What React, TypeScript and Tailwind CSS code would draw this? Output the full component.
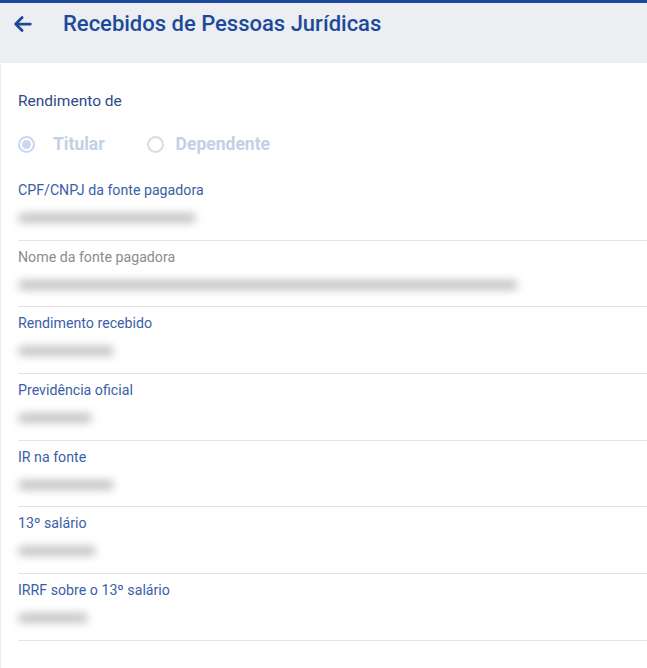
import React from "react";

const fields = [
  { label: "CPF/CNPJ da fonte pagadora", muted: false, w: "w-[178px]" },
  { label: "Nome da fonte pagadora", muted: true, w: "w-[500px]" },
  { label: "Rendimento recebido", muted: false, w: "w-[96px]" },
  { label: "Previdência oficial", muted: false, w: "w-[74px]" },
  { label: "IR na fonte", muted: false, w: "w-[96px]" },
  { label: "13º salário", muted: false, w: "w-[78px]" },
  { label: "IRRF sobre o 13º salário", muted: false, w: "w-[70px]" },
];

export default function App() {
  return (
    <div className="min-h-screen flex flex-col bg-white font-['Roboto',sans-serif]">
      <div className="h-[3px] bg-[#1b4a9c]" />

      {/* cabeçalho */}
      <div className="h-[60px] bg-[#eceef1] flex items-start pt-[7px]">
        <button className="w-[44px] h-[28px] pl-[12px] flex items-center text-[#1b4a9c]">
          <svg width="22" height="22" viewBox="0 0 24 24" fill="none" stroke="currentColor" strokeWidth="3" strokeLinecap="round" strokeLinejoin="round">
            <path d="M20 12H5" />
            <path d="M11 5l-7 7 7 7" />
          </svg>
        </button>
        <h1 className="ml-[19px] text-[22px] leading-[28px] font-medium text-[#1b4a9c]">
          Recebidos de Pessoas Jurídicas
        </h1>
      </div>

      <div className="flex-1 border-l border-[#ececec] pl-[17px] pt-[28px]">
        <p className="text-[15.5px] leading-[20px] text-[#2c4a8a]">Rendimento de</p>

        <div className="flex items-center mt-[22px] h-[22px]">
          <span className="w-[17px] h-[17px] rounded-full border-2 border-[#c9d8f2] flex items-center justify-center">
            <span className="w-[9px] h-[9px] rounded-full bg-[#c9d8f2]" />
          </span>
          <span className="ml-[18px] text-[17.5px] font-bold text-[#c3d0e6]">Titular</span>
          <span className="ml-[42px] w-[17px] h-[17px] rounded-full border-2 border-[#dcdcdc]" />
          <span className="ml-[12px] text-[17.5px] font-bold text-[#c3d0e6]">Dependente</span>
        </div>

        <div className="mt-[19px]">
          {fields.map((f) => (
            <div key={f.label} className="h-[66.7px] border-b border-[#e3e3e3] pt-[7px]">
              <p className={`text-[14.2px] leading-[18px] ${f.muted ? "text-[#8c8c8c]" : "text-[#3b5ea8]"}`}>
                {f.label}
              </p>
              <div className="mt-[11px] h-[16px] flex items-center">
                <div className={`${f.w} h-[10px] rounded-full bg-[#c4c4c4] blur-[4px]`} />
              </div>
            </div>
          ))}
        </div>
      </div>
    </div>
  );
}
